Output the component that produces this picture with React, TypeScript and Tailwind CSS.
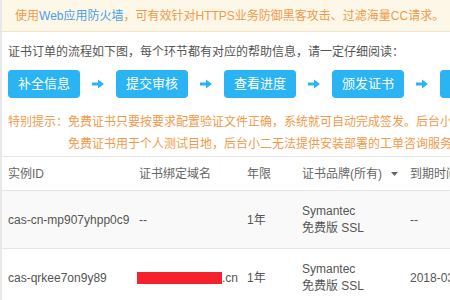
import React from "react";

const font = { fontFamily: '"Liberation Sans", "Noto Sans CJK SC", sans-serif' };

const steps = ["补全信息", "提交审核", "查看进度", "颁发证书", "下载证书"];

const Arrow = () => (
  <svg width="12" height="10" viewBox="0 0 12 10" className="shrink-0">
    <path d="M0 3.5h6V0.5l6 4.5-6 4.5V6.5H0z" fill="#2ab4f4" />
  </svg>
);

const rows = [
  { id: "cas-cn-mp907yhpp0c9", domain: null, years: "1年", expire: "--", shaded: true },
  { id: "cas-qrkee7on9y89", domain: ".cn", years: "1年", expire: "2018-03-21", shaded: false },
];

export default function App() {
  return (
    <div
      className="w-[450px] h-[300px] overflow-hidden bg-white border-l-2 border-[#e8e8e8] text-[12px]"
      style={font}
    >
      <div className="h-[32px] flex items-center pl-[13px] bg-[#fdf7e8] border-b border-[#f3e6c8] whitespace-nowrap text-[#f29a4a]">
        使用<span className="text-[#4a9fe6]">Web应用防火墙</span>，可有效针对HTTPS业务防御黑客攻击、过滤海量CC请求。
      </div>

      <div className="pl-[6px] pt-[10px] text-[#555] whitespace-nowrap leading-[20px]">
        证书订单的流程如下图，每个环节都有对应的帮助信息，请一定仔细阅读：
      </div>

      <div className="flex items-center gap-[12px] pl-[6px] mt-[8px] whitespace-nowrap">
        {steps.map((s, i) => (
          <React.Fragment key={s}>
            <div className="w-[72px] h-[28px] shrink-0 rounded-[4px] bg-[#2ab4f4] text-white text-[13px] flex items-center justify-center">
              {s}
            </div>
            {i < steps.length - 1 && <Arrow />}
          </React.Fragment>
        ))}
      </div>

      <div className="pl-[6px] mt-[13px] text-[#f29a4a] whitespace-nowrap leading-[22px]">
        <div>特别提示：免费证书只要按要求配置验证文件正确，系统就可自动完成签发。后台小二无法人工干预</div>
        <div className="pl-[60px]">免费证书用于个人测试目地，后台小二无法提供安装部署的工单咨询服务</div>
      </div>

      <div className="mt-[1px] border-t border-[#e6e6e6]">
        <div className="h-[34px] flex items-center text-[#666] whitespace-nowrap border-b border-[#e6e6e6]">
          <div className="w-[137px] pl-[6px] shrink-0">实例ID</div>
          <div className="w-[108px] shrink-0">证书绑定域名</div>
          <div className="w-[55px] shrink-0">年限</div>
          <div className="w-[108px] shrink-0 flex items-center gap-[9px]">
            证书品牌(所有)
            <svg width="7" height="4" viewBox="0 0 7 4">
              <path d="M0 0h7L3.5 4z" fill="#666" />
            </svg>
          </div>
          <div className="shrink-0">到期时间</div>
        </div>
        {rows.map((r) => (
          <div
            key={r.id}
            className={`h-[58px] flex items-center text-[#555] whitespace-nowrap border-b border-[#e6e6e6] ${r.shaded ? "bg-[#f9f9f9]" : "bg-white"}`}
          >
            <div className="w-[137px] pl-[6px] shrink-0">{r.id}</div>
            <div className="w-[108px] shrink-0 flex items-center">
              {r.domain ? (
                <>
                  <span className="w-[85px] h-[12px] bg-[#f5222d] -ml-[2px]" />
                  <span>{r.domain}</span>
                </>
              ) : (
                "--"
              )}
            </div>
            <div className="w-[55px] shrink-0">{r.years}</div>
            <div className="w-[108px] shrink-0 leading-[17px]">
              <div>Symantec</div>
              <div>免费版 SSL</div>
            </div>
            <div className="shrink-0">{r.expire}</div>
          </div>
        ))}
      </div>
    </div>
  );
}
